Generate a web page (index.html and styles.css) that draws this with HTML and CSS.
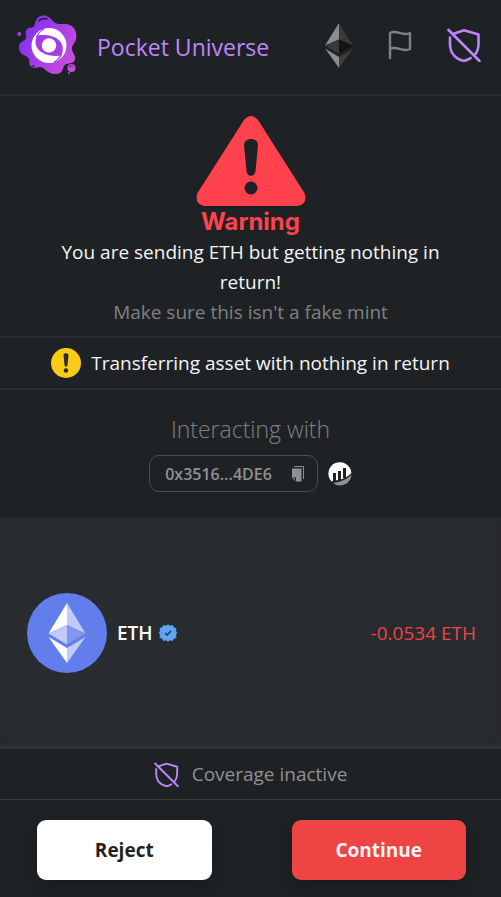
FILE: index.html
```html
<!DOCTYPE html>
<html lang="en">
<head>
    <meta charset="UTF-8">
    <meta name="viewport" content="width=device-width, initial-scale=1.0">
    <title>Pocket Universe</title>
    <link rel="stylesheet" href="styles.css">
</head>
<body>
    <svg class="sprite" aria-hidden="true">
        <symbol id="shield-slash" viewBox="0 0 34 34">
            <g fill="none" stroke="currentColor" stroke-width="2.6" stroke-linecap="round" stroke-linejoin="round">
                <path d="M1.500 2L32.500 33"/>
                <path d="M6 6L17 2.300L31.500 6.500V16C31.500 20 30.500 23.500 28 26.500"/>
                <path d="M3 9.500V16C3 25 8.500 31 17 33C19.500 32.400 21.800 31.400 23.600 30.200"/>
            </g>
        </symbol>
    </svg>

    <header class="header">
        <svg class="logo" viewBox="0 0 60 60" role="img" aria-label="Pocket Universe logo">
            <defs>
                <linearGradient id="splat" x1="0" y1="0.2" x2="1" y2="0.8">
                    <stop offset="0" stop-color="#7f2cf0"/>
                    <stop offset="1" stop-color="#cc50dc"/>
                </linearGradient>
            </defs>
            <g transform="translate(0 2)">
                <path fill="url(#splat)" d="M17 6C19-3 29-4 34 3C38 8 42 7 47 7C55 7 60 14 58 22C57 27 53 28 54 33C55 37 58 38 57 43C55 48 48 45 46 49C44 55 43 57 37 57C29 57 28 51 22 50C19 50 17 52 14 50C10 48 12 45 11 42C9 37 2 40 1 31C0 24 7 25 8 21C9 18 6 16 9 12C12 9 16 13 17 6Z"/>
                <circle cx="1.300" cy="17" r="2" fill="#a33be8"/>
                <circle cx="53.500" cy="51" r="4" fill="#c04fdc"/>
                <circle cx="51" cy="56" r="1" fill="#c04fdc"/>
                <path d="M21 4Q24 .5 29 2" fill="none" stroke="#1f2225" stroke-width="1.500" stroke-linecap="round"/>
                <circle cx="15.500" cy="49" r="1" fill="#1f2225"/>
                <path d="M51 50Q52 48.500 55 49" fill="none" stroke="#1f2225" stroke-width=".8"/>
            </g>
            <circle cx="31" cy="30.500" r="17.500" fill="#fff"/>
            <path fill="#a53ce8" d="M19 20.500C36 18 49 26 43.500 40.500C26 43 13 34 19 20.500Z"/>
            <path fill="none" stroke="#a53ce8" stroke-width="1.200" d="M18.500 22Q20.500 17 26 14M43.500 39Q41.500 44 36 47"/>
            <circle cx="31" cy="30.500" r="7.200" fill="#fff"/>
        </svg>
        <h1 class="title">Pocket Universe</h1>
        <nav class="tools">
            <button class="tool" aria-label="Ethereum network">
                <svg width="28" height="46" viewBox="0 0 28 46">
                    <path fill="#8c8c8c" d="M14 1V17.500L0 23.500Z"/>
                    <path fill="#393939" d="M14 1L28 23.500L14 17.500Z"/>
                    <path fill="#393939" d="M0 23.500L14 17.500V32Z"/>
                    <path fill="#141414" d="M28 23.500L14 17.500V32Z"/>
                    <path fill="#8c8c8c" d="M0 26.500L14 35V46Z"/>
                    <path fill="#3c3c3b" d="M28 26.500L14 35V46Z"/>
                </svg>
            </button>
            <button class="tool" aria-label="Report">
                <svg width="24" height="30" viewBox="0 0 24 30" fill="none" stroke="#808080" stroke-width="2.400" stroke-linecap="round" stroke-linejoin="round">
                    <path d="M2 28V3C9-1 14 7 22 3V19C14 23 9 15 2 19"/>
                </svg>
            </button>
            <button class="tool purple" aria-label="Coverage">
                <svg width="34" height="34"><use href="#shield-slash"/></svg>
            </button>
        </nav>
    </header>

    <section class="warning">
        <svg width="110" height="92" viewBox="0 0 110 92" aria-hidden="true">
            <path fill="#ff424d" d="M48 5Q55-3 62 5L108.500 78Q112 89 102 91H8Q-2 89 1.500 78Z"/>
            <path fill="#1f2225" d="M48 30C48 22 62 22 62 30L59.500 56C59 62.500 51 62.500 50.500 56Z"/>
            <circle cx="55" cy="73" r="6.500" fill="#1f2225"/>
        </svg>
        <h2 class="warning-title">Warning</h2>
        <p class="message">You are sending ETH but getting nothing in return!</p>
        <p class="message muted">Make sure this isn't a fake mint</p>
    </section>

    <section class="notice">
        <svg width="30" height="30" viewBox="0 0 30 30" aria-hidden="true">
            <circle cx="15" cy="15" r="15" fill="#facc15"/>
            <path fill="#2b2b22" d="M12.500 7C12.500 4.500 17.500 4.500 17.500 7L16.500 17C16.300 19 13.700 19 13.500 17Z"/>
            <circle cx="15" cy="22.500" r="2.200" fill="#2b2b22"/>
        </svg>
        <p>Transferring asset with nothing in return</p>
    </section>

    <section class="contract">
        <h3 class="contract-title">Interacting with</h3>
        <div class="contract-row">
            <button class="address">
                0x3516...4DE6
                <svg width="12" height="16" viewBox="0 0 12 16" aria-hidden="true">
                    <path fill="#909193" d="M0 2.500H9.500V15.500H4L0 12Z"/>
                    <path fill="none" stroke="#909193" d="M2 .5H11.500V13"/>
                    <path fill="#1f2225" d="M1 11.500H4V14.500H3V12.500H1Z"/>
                </svg>
            </button>
            <a class="etherscan" href="#" aria-label="View on Etherscan">
                <svg width="24" height="24" viewBox="0 0 24 24">
                    <path fill="#fff" d="M3.500 19.500A11.500 11.500 0 1 1 23.400 11C20 15 13 18.500 5.500 18.500Z"/>
                    <path fill="#909193" d="M5 21C13 20 20 17 23.500 12.500A11.500 11.500 0 0 1 5 21Z"/>
                    <path stroke="#1f2225" stroke-width="3" d="M6.500 11V19M11.500 9V18M16.500 6V16"/>
                </svg>
            </a>
        </div>
    </section>

    <main class="assets">
        <div class="asset">
            <svg width="80" height="80" viewBox="0 0 80 80" aria-hidden="true">
                <circle cx="40" cy="40" r="40" fill="#627eea"/>
                <path fill="#fff" d="M40 10V32L21.500 40.500Z"/>
                <path fill="#c0cbf7" d="M40 10V32L58.500 40.500Z"/>
                <path fill="#c0cbf7" d="M40 32V51.500L21.500 40.500Z"/>
                <path fill="#8197ee" d="M40 32V51.500L58.500 40.500Z"/>
                <path fill="#fff" d="M40 55V70L21.500 44Z"/>
                <path fill="#c0cbf7" d="M40 55V70L58.500 44Z"/>
            </svg>
            <span class="asset-name">ETH</span>
            <svg width="18" height="18" viewBox="0 0 18 18" role="img" aria-label="Verified">
                <path fill="#60a5fa" stroke="#60a5fa" stroke-linejoin="round" d="M9 .8L11 2.200L13.500 1.500L14.500 3.700L17 4.500L16.500 7L17.500 9L16.500 11L17 13.500L14.500 14.300L13.500 16.500L11 15.800L9 17.200L7 15.800L4.500 16.500L3.500 14.300L1 13.500L1.500 11L.5 9L1.500 7L1 4.500L3.500 3.700L4.500 1.500L7 2.200Z"/>
                <path fill="none" stroke="#282b30" stroke-width="1.300" d="M6 9L8.200 11L12 7"/>
            </svg>
            <span class="amount">-0.0534 ETH</span>
        </div>
    </main>

    <section class="coverage">
        <svg class="purple" width="25" height="25" aria-hidden="true"><use href="#shield-slash"/></svg>
        <p>Coverage inactive</p>
    </section>

    <footer class="actions">
        <button class="btn reject">Reject</button>
        <button class="btn continue">Continue</button>
    </footer>
</body>
</html>
```

FILE: styles.css
```css
* {
    box-sizing: border-box;
}
body {
    display: flex;
    flex-direction: column;
    min-height: 100vh;
    margin: 0;
    background-color: #1f2225;
    color: #f5f5f5;
    font-family: "Segoe UI", "Open Sans", sans-serif;
    font-size: 19px;
    line-height: 30px;
}
h1, h2, h3, p {
    margin: 0;
}
svg {
    display: block;
    flex-shrink: 0;
}
button {
    font-family: inherit;
    cursor: pointer;
}
.sprite {
    position: absolute;
    width: 0;
    height: 0;
}
.header {
    display: flex;
    align-items: center;
    height: 96px;
    padding: 0 20px 4px 18px;
    border-bottom: 2px solid #292c30;
}
.logo {
    width: 60px;
    height: 60px;
    overflow: visible;
}
.title {
    margin-left: 19px;
    padding-top: 3px;
    color: #c084fc;
    font-size: 23px;
    font-weight: 400;
}
.tools {
    display: flex;
    align-items: center;
    gap: 35px;
    margin-left: auto;
}
.tool {
    padding: 0;
    border: none;
    background: none;
}
.purple {
    color: #c084fc;
}
.warning {
    display: flex;
    flex-direction: column;
    align-items: center;
    padding: 19px 40px 9px;
    border-bottom: 2px solid #292c30;
    text-align: center;
}
.warning-title {
    color: #ff424d;
    font-family: Inter, sans-serif;
    font-size: 24px;
    font-weight: 700;
}
.muted {
    color: #808080;
}
.notice {
    display: flex;
    align-items: center;
    justify-content: center;
    gap: 10px;
    padding: 10px 0;
    border-bottom: 2px solid #292c30;
}
.contract {
    display: flex;
    flex-direction: column;
    align-items: center;
    gap: 11px;
    padding: 24px 0 25px;
}
.contract-title {
    color: #808080;
    font-size: 23px;
    font-weight: 300;
}
.contract-row {
    display: flex;
    align-items: center;
    gap: 10px;
}
.address {
    display: flex;
    align-items: center;
    gap: 20px;
    height: 37px;
    padding: 0 13px 0 15px;
    border: 1px solid #4b4d50;
    border-radius: 10px;
    background: none;
    color: #909193;
    font-size: 16px;
    font-weight: 600;
}
.assets {
    display: flex;
    flex: 1;
    flex-direction: column;
    justify-content: center;
    background-color: #282b30;
    border-bottom: 2px solid #323639;
    box-shadow: inset 0 -4px 4px -2px #303438, inset 0 2px 8px #25282c;
}
.asset {
    display: flex;
    align-items: center;
    padding: 2px 25px 0 27px;
}
.asset-name {
    margin: 0 6px 0 10px;
    color: #fff;
    font-weight: 600;
}
.amount {
    margin-left: auto;
    color: #ef4444;
}
.coverage {
    display: flex;
    align-items: center;
    justify-content: center;
    gap: 13px;
    height: 51px;
    border-bottom: 1px solid #3a3d40;
    color: #909193;
}
.actions {
    display: grid;
    grid-template-columns: 1fr 1fr;
    gap: 80px;
    padding: 20px 35px 17px 37px;
}
.btn {
    height: 60px;
    border: none;
    border-radius: 9px;
    box-shadow: 0 6px 12px rgba(0, 0, 0, 0.2);
    font-size: 19px;
    font-weight: 700;
}
.reject {
    background-color: #fff;
    color: #1f2225;
}
.continue {
    background-color: #ef4444;
    color: #f5f5f5;
}
```
